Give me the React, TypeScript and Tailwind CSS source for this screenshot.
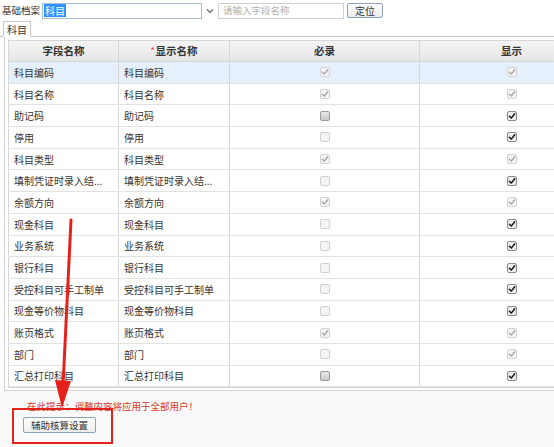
import React from "react";

type Box = "dc" | "du" | "ec" | "eu";

const rows: { field: string; label: string; req: Box; show: Box }[] = [
  { field: "科目编码", label: "科目编码", req: "dc", show: "dc" },
  { field: "科目名称", label: "科目名称", req: "dc", show: "dc" },
  { field: "助记码", label: "助记码", req: "eu", show: "ec" },
  { field: "停用", label: "停用", req: "du", show: "ec" },
  { field: "科目类型", label: "科目类型", req: "dc", show: "dc" },
  { field: "填制凭证时录入结...", label: "填制凭证时录入结...", req: "du", show: "ec" },
  { field: "余额方向", label: "余额方向", req: "dc", show: "dc" },
  { field: "现金科目", label: "现金科目", req: "du", show: "ec" },
  { field: "业务系统", label: "业务系统", req: "du", show: "ec" },
  { field: "银行科目", label: "银行科目", req: "du", show: "ec" },
  { field: "受控科目可手工制单", label: "受控科目可手工制单", req: "du", show: "ec" },
  { field: "现金等价物科目", label: "现金等价物科目", req: "du", show: "ec" },
  { field: "账页格式", label: "账页格式", req: "dc", show: "dc" },
  { field: "部门", label: "部门", req: "du", show: "dc" },
  { field: "汇总打印科目", label: "汇总打印科目", req: "eu", show: "ec" },
];

function Check({ state }: { state: Box }) {
  const checked = state === "dc" || state === "ec";
  const disabled = state === "dc" || state === "du";
  return (
    <span
      className={
        disabled
          ? "flex h-[10px] w-[10px] items-center justify-center rounded-[2px] border border-[#d2d2d2] bg-[#f4f4f4]"
          : checked
          ? "flex h-[10px] w-[10px] items-center justify-center rounded-[2px] border border-[#8a8a8a] bg-[#ececec]"
          : "flex h-[10px] w-[10px] items-center justify-center rounded-[2px] border border-[#9a9a9a] bg-gradient-to-b from-[#e8e8e8] to-[#c8c8c8]"
      }
    >
      {checked && (
        <svg width="8" height="8" viewBox="0 0 10 10">
          <path
            d="M1.8 5.4 L4.1 7.6 L8.4 2.2"
            fill="none"
            stroke={disabled ? "#a8a8a8" : "#111"}
            strokeWidth="1.8"
            strokeLinecap="round"
            strokeLinejoin="round"
          />
        </svg>
      )}
    </span>
  );
}

export default function App() {
  return (
    <div className="relative h-[447px] w-[554px] overflow-hidden bg-white font-['Noto_Sans_CJK_SC',sans-serif] text-[10px] text-[#333]">
      {/* top bar */}
      <div className="flex h-[20px] items-center pl-[2px] pt-[1px]">
        <span className="w-[40px] text-[9.5px] leading-none text-[#333]">基础档案</span>
        <div className="flex h-[16px] w-[160px] items-center border border-[#a9bdd3] bg-white pl-[1px]">
          <span className="bg-[#3390ff] px-[1px] text-[10px] leading-[13px] text-white">科目</span>
        </div>
        <div className="flex h-[16px] w-[16px] items-center justify-center">
          <svg width="8" height="6" viewBox="0 0 8 6">
            <path d="M1 1.5 L4 4.5 L7 1.5" fill="none" stroke="#666" strokeWidth="1.2" />
          </svg>
        </div>
        <div className="flex h-[16px] w-[126px] items-center border border-[#cfcfcf] bg-white px-[4px] text-[9.5px] text-[#b0b0b0]">
          请输入字段名称
        </div>
        <button className="ml-[3px] flex h-[15px] w-[36px] items-center justify-center rounded-[2px] border border-[#8fa3b8] bg-gradient-to-b from-white to-[#ececec] text-[10px] text-[#333]">
          定位
        </button>
      </div>

      {/* tab */}
      <div className="flex h-[17px] items-end border-b border-[#c8c8c8] pl-[3px]">
        <div className="-mb-px flex h-[16px] w-[28px] items-center justify-center border border-b-white border-[#c8c8c8] bg-white text-[10px]">
          科目
        </div>
      </div>

      {/* grid panel */}
      <div className="ml-[4px] border-b border-l border-[#d0d0d0] pb-[2px] pl-[3px] pt-[3px]">
        <div className="w-[595px] border-b border-[#d6d6d6]">
          <div className="grid h-[22px] grid-cols-[110px_111px_190px_184px] border-y border-[#d6d6d6] bg-gradient-to-b from-[#f4f4f4] to-[#e6e6e6] text-[10.5px] font-bold text-[#333]">
            <div className="flex items-center justify-center border-l border-[#d6d6d6]">字段名称</div>
            <div className="flex items-center justify-center border-l border-[#d6d6d6]">
              <span className="mr-[1px] text-[9px] font-normal text-[#e33]">*</span>显示名称
            </div>
            <div className="flex items-center justify-center border-l border-[#d6d6d6]">必录</div>
            <div className="flex items-center justify-center border-l border-[#d6d6d6]">显示</div>
          </div>
          {rows.map((r, i) => (
            <div
              key={i}
              className={
                "grid h-[21.7px] grid-cols-[110px_111px_190px_184px] border-b border-[#e2e2e2] " +
                (i === 0 ? "bg-[#e6f0fc]" : "bg-white")
              }
            >
              <div className="flex items-center overflow-hidden whitespace-nowrap border-l border-[#d6d6d6] pl-[5px]">{r.field}</div>
              <div className="flex items-center overflow-hidden whitespace-nowrap border-l border-[#d6d6d6] pl-[5px]">{r.label}</div>
              <div className="flex items-center justify-center border-l border-[#d6d6d6]">
                <Check state={r.req} />
              </div>
              <div className="flex items-center justify-center border-l border-[#d6d6d6]">
                <Check state={r.show} />
              </div>
            </div>
          ))}
        </div>
      </div>

      {/* footer */}
      <div className="h-[60px] bg-[#f9f9f9] pl-[27px] pt-[9px]">
        <div className="text-[9.5px] leading-[12px] text-[#d03a2a]">在此提示：调整内容将应用于全部用户！</div>
        <button className="ml-[-4px] mt-[5px] flex h-[16px] w-[73px] items-center justify-center rounded-[2px] border border-[#8fa3b8] bg-gradient-to-b from-white to-[#eeeeee] text-[9.5px] text-[#333]">
          辅助核算设置
        </button>
      </div>

      {/* annotation: red box and arrow */}
      <div className="pointer-events-none absolute left-[12px] top-[408px] h-[36px] w-[101px] border-2 border-[#e4211b]" />
      <svg className="pointer-events-none absolute left-0 top-0" width="554" height="447">
        <path d="M71 220 L63 386" stroke="#e4211b" strokeWidth="3" strokeLinecap="round" />
        <path d="M55 380 L71 381 L62 408 Z" fill="#e4211b" />
      </svg>
    </div>
  );
}
